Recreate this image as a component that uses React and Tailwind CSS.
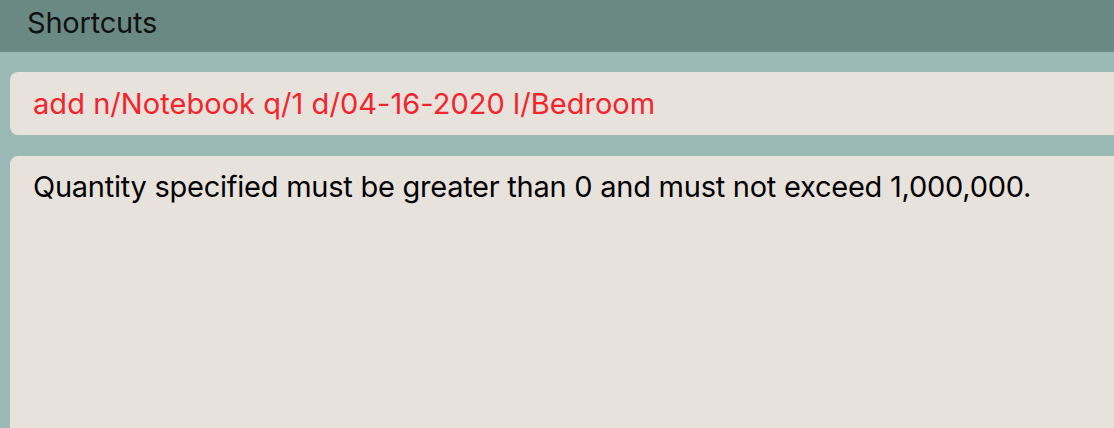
export default function App() {
  return (
    <div className="w-[1114px] h-[428px] overflow-hidden bg-[#9bbab5] flex flex-col" style={{ fontFamily: "Inter, 'Liberation Sans', sans-serif" }}>
      <div className="h-[52px] shrink-0 bg-[#6a8983] flex items-center pl-[27px]">
        <span className="text-[29px] text-[#111] leading-none -mt-[8px] tracking-[-0.2px]">Shortcuts</span>
      </div>
      <div className="flex flex-col gap-[21px] pt-[20px] pl-[10px] mr-[-20px] flex-1">
        <div className="h-[63px] rounded-[8px] bg-[#e8e2dd] flex items-center pl-[23px]">
          <span className="text-[29px] text-[#f4242b] leading-none -mt-[1px] tracking-[0.05px]">add n/Notebook q/1 d/04-16-2020 l/Bedroom</span>
        </div>
        <div className="flex-1 rounded-t-[8px] bg-[#e8e2dd] pl-[23px] pt-[16px]">
          <span className="text-[29px] text-black leading-none tracking-[-0.25px]">Quantity specified must be greater than 0 and must not exceed 1,000,000.</span>
        </div>
      </div>
    </div>
  );
}
